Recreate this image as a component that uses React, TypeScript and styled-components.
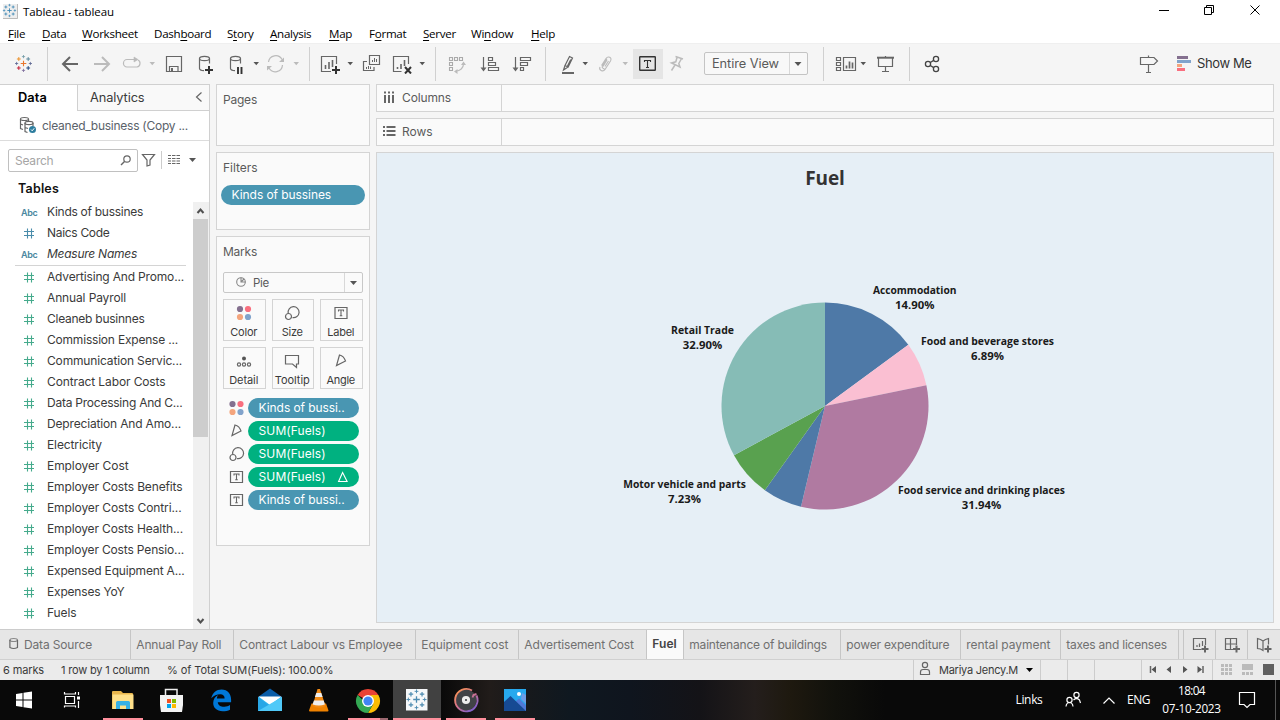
import React, { ReactNode, useLayoutEffect, useRef } from "react";
import styled, { createGlobalStyle, css } from "styled-components";

const UI = `Inter, "Liberation Sans", sans-serif`;
const SYS = `"Open Sans", "Noto Sans", sans-serif`;

const Global = createGlobalStyle`
  *, *::before, *::after { box-sizing: border-box; }
  html, body { margin: 0; padding: 0; overflow: hidden; }
  body { background: #f5f5f5; font-family: ${UI}; font-size: 12px; color: #3a3a3a; }
`;

/* ---------- text ---------- */

const TextSpan = styled.span`
  display: inline-block;
  white-space: pre;
  flex: none;
`;

/** A single line of text, tracked so that it fills exactly `w` pixels. */
function Line({ w, children }: { w: number; children: string }) {
  const ref = useRef<HTMLSpanElement>(null);
  useLayoutEffect(() => {
    const el = ref.current;
    if (!el) return;
    el.style.letterSpacing = "0px";
    const natural = el.getBoundingClientRect().width;
    el.style.letterSpacing = `${(w - natural) / children.length}px`;
  }, [w, children]);
  return <TextSpan ref={ref}>{children}</TextSpan>;
}

/* ---------- icon primitives ---------- */

const Svg = styled.svg`
  display: block;
  flex: none;
`;

/** An icon cell; x and y are the origin of its drawing grid. */
function Cell({ x, y = 54, w, h = 20, children }: { x: number; y?: number; w: number; h?: number; children?: ReactNode }) {
  return (
    <Svg width={w} height={h} viewBox={`${x} ${y} ${w} ${h}`} fill="none" stroke="#666" strokeWidth="1.2">
      {children}
    </Svg>
  );
}

const Caret = ({ x, y = 62, s = 6, c = "#555" }: { x: number; y?: number; s?: number; c?: string }) => (
  <path d={`M${x} ${y}h${s}l${-s / 2} ${s / 2 + 0.5}z`} fill={c} stroke="none" />
);

const Plus = ({ x, y, r, c, w = 1 }: { x: number; y: number; r: number; c: string; w?: number }) => (
  <path d={`M${x - r} ${y}h${2 * r}M${x} ${y - r}v${2 * r}`} stroke={c} strokeWidth={w} fill="none" />
);

const LOGO_COLORS = ["#e8762d", "#7099a5", "#c72037", "#1f447e", "#59879b", "#7b6a9a", "#5b6591", "#eb912b", "#5b879b"];

function TableauMark({ x, y, s = 1, mono }: { x: number; y: number; s?: number; mono?: string }) {
  const c = (i: number) => mono || LOGO_COLORS[i];
  return (
    <g>
      <Plus x={x} y={y} r={2.8 * s} c={c(0)} w={1.1 * s} />
      <Plus x={x} y={y - 6.9 * s} r={1.6 * s} c={c(1)} w={0.8 * s} />
      <Plus x={x} y={y + 6.9 * s} r={1.6 * s} c={c(5)} w={0.8 * s} />
      <Plus x={x - 6.9 * s} y={y} r={1.6 * s} c={c(6)} w={0.8 * s} />
      <Plus x={x + 6.9 * s} y={y} r={1.6 * s} c={c(6)} w={0.8 * s} />
      <Plus x={x - 4.7 * s} y={y - 4.5 * s} r={1.9 * s} c={c(7)} w={s} />
      <Plus x={x + 4.7 * s} y={y - 4.5 * s} r={1.9 * s} c={c(8)} w={s} />
      <Plus x={x - 4.7 * s} y={y + 4.5 * s} r={1.9 * s} c={c(2)} w={s} />
      <Plus x={x + 4.7 * s} y={y + 4.5 * s} r={1.9 * s} c={c(3)} w={s} />
    </g>
  );
}

/* ---------- window frame ---------- */

const Window = styled.div`
  width: 1280px;
  height: 720px;
  display: flex;
  flex-direction: column;
  overflow: hidden;
  background: #f5f5f5;
`;

const TitleBar = styled.header`
  height: 24px;
  flex: none;
  display: flex;
  background: #fff;
  color: #000;
  font: 11.5px/24px ${SYS};
`;

const Spacer = styled.div`
  flex: 1;
`;

const MenuBar = styled.nav`
  height: 19px;
  flex: none;
  display: flex;
  background: #fff;
  color: #000;
  font: 11.600px/19px ${SYS};
  padding-left: 8px;
`;

const MenuItem = styled.div<{ $slot: number }>`
  width: ${(p) => p.$slot}px;
  white-space: pre;
  letter-spacing: -0.28px;
  u { text-underline-offset: 2px; }
`;

const MENUS: [string, string, string, number][] = [
  ["", "F", "ile", 34], ["", "D", "ata", 40], ["", "W", "orksheet", 72], ["Dash", "b", "oard", 73],
  ["S", "t", "ory", 43], ["", "A", "nalysis", 59], ["", "M", "ap", 40], ["F", "o", "rmat", 54],
  ["", "S", "erver", 48], ["Wi", "n", "dow", 60], ["", "H", "elp", 40],
];

/* ---------- toolbar ---------- */

const Toolbar = styled.div`
  height: 41px;
  flex: none;
  display: flex;
  align-items: flex-start;
  padding-top: 11px;
  background: #f5f5f5;
  box-shadow: inset 0 1px #efefef;
`;

const Rule = styled.div`
  width: 1px;
  height: 34px;
  margin-top: -7px;
  background: #d0d0d0;
  flex: none;
`;

const LabelToggle = styled.div`
  width: 30px;
  height: 30px;
  margin-top: -5px;
  padding-top: 5px;
  background: #e5e5e5;
  flex: none;
`;

const FitSelect = styled.div`
  width: 104px;
  height: 23px;
  margin: -2px 15px 0 16px;
  border: 1px solid #c4c4c4;
  border-radius: 2px;
  display: flex;
  flex: none;
  background: #f8f8f8;
  color: #5a5a5a;
  font-size: 12.800px;
  line-height: 22px;
  padding-left: 7px;
`;

const SelectArrow = styled.div`
  width: 18px;
  margin-left: auto;
  border-left: 1px solid #d8d8d8;
  padding-top: 1px;
`;

const ShowMe = styled.div`
  font-size: 13px;
  line-height: 19px;
  color: #333;
`;

const Database = ({ x }: { x: number }) => (
  <>
    <ellipse cx={x + 5.5} cy="58.5" rx="5" ry="2.2" />
    <path d={`M${x + 0.5} 58.5v10c0 1.3 2 2 4.5 2.2M${x + 10.5} 58.5v5`} />
  </>
);

function MainToolbar() {
  const dim = "#bbb";
  return (
    <Toolbar>
      <Cell x={0} w={47}><TableauMark x={23.5} y={63.5} /></Cell>
      <Rule />
      <Cell x={48} w={39}><path d="M78 64H63.500M70 57l-7 7 7 7" strokeWidth="2" /></Cell>
      <Cell x={87} w={30}><path d="M94 64h14.500M102 57l7 7-7 7" stroke={dim} strokeWidth="2" /></Cell>
      <Cell x={117} w={43}>
        <path d="M134.500 59.500H127a3.500 3.700 0 0 0 0 7.500h10a3.500 3.700 0 0 0 1-7" stroke={dim} />
        <path d="M134 57l4 2.500-4 2.500z" fill={dim} stroke={dim} strokeWidth=".6" />
        <Caret x={149.500} s={5.500} c={dim} />
      </Cell>
      <Cell x={160} w={32}>
        <path d="M166.500 56.500h15v15h-15zM169.500 71.500v-5h8.500v5" />
        <path d="M171 68h2v3h-2z" fill="#666" stroke="none" />
      </Cell>
      <Cell x={192} w={32}><Database x={199} /><path d="M205 70h8M209 66v8" stroke="#333" strokeWidth="2" /></Cell>
      <Cell x={224} w={38}>
        <Database x={230} />
        <path d="M238 67v7M241.500 67v7" stroke="#333" strokeWidth="1.900" />
        <Caret x={253.500} s={5.500} />
      </Cell>
      <Cell x={262} w={47}>
        <path d="M268.500 62a7.200 7.200 0 0 1 13.500-2.500M282.500 65a7.200 7.200 0 0 1-13.500 3" stroke={dim} />
        <path d="M284 57.500v4.500h-5zM267 70.500V66h5z" fill={dim} stroke="none" />
        <Caret x={293.500} s={5.500} c={dim} />
      </Cell>
      <Rule />
      <Cell x={310} w={47}>
        <path d="M336.500 64V56.500h-15v15H331" />
        <path d="M325.500 69v-4M329 69v-7M332.500 67v-7" strokeWidth="1.600" />
        <path d="M332 70h8M336 66v8" stroke="#333" strokeWidth="2" />
        <Caret x={347.500} s={5.500} />
      </Cell>
      <Cell x={357} w={29}>
        <path d="M369.500 55.500h10v9h-10zM367 61.500h-3.500v9h10.500v-3.500" />
        <path d="M372.500 62v-2M374.500 62v-4M376.500 62v-3M366.500 69v-2M368.500 69v-3M370.500 69v-2.500" strokeWidth="1" />
      </Cell>
      <Cell x={386} w={49}>
        <path d="M408.500 64V56.500h-15v15h8" />
        <path d="M397.500 69v-2M401 69v-5M404.500 66v-6" strokeWidth="1.600" />
        <path d="M405 67l6 6.500M411 67l-6 6.500" stroke="#333" strokeWidth="2" />
        <Caret x={419.500} s={5.500} />
      </Cell>
      <Rule />
      <Cell x={436} w={40}>
        <path d="M449.500 57.500h3v3h-3zM454.500 57.500h3v3h-3zM459.500 57.500h3v3h-3zM449.500 62.500h3v3h-3zM449.500 67.500h3v3h-3z" stroke="#aaa" strokeWidth="1.100" />
        <path d="M456 71c4 0 7.500-3 7.500-7" stroke={dim} />
        <path d="M463.500 61.500l2.500 3.500h-5zM454 71.500l3.500-2.500v5z" fill={dim} stroke="none" />
      </Cell>
      <Cell x={476} w={31}>
        <path d="M483.500 57v12M488.500 57.500h4v3h-4zM488.500 62.500h7v3h-7zM488.500 67.500h10v3h-10z" />
        <path d="M480.500 67.500h6l-3 4z" fill="#666" stroke="none" />
      </Cell>
      <Cell x={507} w={38}>
        <path d="M515.500 57v12M520.500 57.500h10v3h-10zM520.500 62.500h7v3h-7zM520.500 67.500h3v3h-3z" />
        <path d="M512.500 67.500h6l-3 4z" fill="#666" stroke="none" />
      </Cell>
      <Rule />
      <Cell x={546} w={46}>
        <path d="M569.500 56.500l3 1.500-4.300 9-3.200-1.500zM565 65.500l-1.500 4.500 4.500-3M570.800 59.500l-3.300 6.500" />
        <path d="M562 73h12" strokeWidth="2" />
        <Caret x={582.500} s={5.500} />
      </Cell>
      <Cell x={592} w={41}>
        <path d="M601.500 65.500l4.500-7c2-3 6.500-1 4.500 2.500l-5.500 8.500c-2 3-6.500.5-5-2.500M605 69.500l-2-1.200c-1-.7-1-1.800-.5-2.600l4.500-7M603 66.500l4-6.500M605 66.500l3.500-5.500" stroke={dim} strokeWidth="1.100" />
        <Caret x={622.500} s={5.500} c={dim} />
      </Cell>
      <LabelToggle>
        <Cell x={633} w={30}>
          <rect x="639.700" y="56.700" width="15.600" height="13.600" rx=".5" stroke="#333" strokeWidth="1.400" />
          <path d="M644.500 62v-1.500h6V62M647.500 60.500v7M646 67.500h3" stroke="#333" strokeWidth="1.100" />
        </Cell>
      </LabelToggle>
      <Cell x={663} w={25}>
        <path d="M675.500 56.500l7.500 2.500M677 57.500l-1.200 4.300-4.300 1.200 8.500 4-1.200-3.500 2.500-4.500M675 65l-3.500 5.500" stroke={dim} strokeWidth="1.500" />
      </Cell>
      <FitSelect>
        <Line w={67}>Entire View</Line>
        <SelectArrow><Cell x={790} w={16}><Caret x={794.500} y={62} s={7} /></Cell></SelectArrow>
      </FitSelect>
      <Rule />
      <Cell x={824} w={47}>
        <path d="M836.500 57.500h4v3h-4zM836.500 62.500h4v3h-4zM836.500 67.500h4v3h-4zM843.500 57.500h12v13h-12z" />
        <path d="M846.500 68.500v-3M849.500 68.500v-7M852.500 68.500v-6" strokeWidth="1.700" />
        <Caret x={860.500} s={5.500} />
      </Cell>
      <Cell x={871} w={38}>
        <path d="M877 57.700h17" strokeWidth="2" />
        <path d="M878.500 58v8.500h14V58M885.500 56v1M885.500 66.500v4.500M882 71.500h7" />
      </Cell>
      <Rule />
      <Cell x={910} w={40}>
        <g stroke="#444" strokeWidth="1.300">
          <circle cx="928" cy="64" r="2.600" /><circle cx="936" cy="59" r="2.600" /><circle cx="936" cy="69" r="2.600" />
          <path d="M930.300 62.500l3.400-2.100M930.300 65.500l3.400 2.100" />
        </g>
      </Cell>
      <Spacer />
      <Cell x={1130} w={42}>
        <path d="M1140.500 57.500h13.500l3.500 3.500-3.500 3.500h-13.500zM1148.500 55.500v2M1148.500 64.500v8M1146 72.500h5" />
      </Cell>
      <Cell x={1172} w={25}>
        <g stroke="none">
          <path d="M1177 56h11v3h-11z" fill="#84708f" /><path d="M1177 60h14v3h-14z" fill="#81a3cb" />
          <path d="M1177 64h5v3h-5z" fill="#f4a57d" /><path d="M1177 68h8v3h-8z" fill="#f96f7f" />
        </g>
      </Cell>
      <ShowMe><Line w={54.500}>Show Me</Line></ShowMe>
      <Cell x={1251.5} w={28.5} />
    </Toolbar>
  );
}

/* ---------- workspace ---------- */

const Workspace = styled.main`
  height: 545px;
  flex: none;
  display: flex;
`;

const Sidebar = styled.aside`
  width: 210px;
  flex: none;
  background: #fff;
  border-right: 1px solid #d0d0d0;
  border-top: 1px solid #d0d0d0;
  display: flex;
  flex-direction: column;
  overflow: hidden;
`;

const PaneTabs = styled.div`
  display: flex;
  height: 26px;
  flex: none;
  font-size: 12.800px;
  line-height: 25px;
`;

const PaneTab = styled.div<{ $active?: boolean }>`
  ${(p) =>
    p.$active
      ? css`width: 77px; padding-left: 18px; color: #000; font-weight: 600;`
      : css`flex: 1; padding-left: 12px; display: flex; justify-content: space-between; background: #f9f9f9; border-left: 1px solid #d0d0d0; border-bottom: 1px solid #d0d0d0;`}
`;

const SourceRow = styled.div`
  height: 30px;
  flex: none;
  display: flex;
  border-bottom: 1px solid #dcdcdc;
  color: #5a626a;
  line-height: 29px;
`;

const SearchRow = styled.div`
  display: flex;
  height: 40px;
  flex: none;
  padding: 8px 0 0 8px;
`;

const SearchBox = styled.div`
  width: 130px;
  height: 23px;
  border: 1px solid #c0c0c0;
  border-radius: 2px;
  padding-left: 6px;
  color: #a5a5a5;
  line-height: 22px;
  display: flex;
  justify-content: space-between;
`;

const Heading = styled.h2`
  margin: 0;
  height: 21px;
  flex: none;
  padding-left: 18px;
  font-size: 12.500px;
  line-height: 15px;
  font-weight: 600;
  color: #111;
`;

const Fields = styled.div`
  display: flex;
  flex: 1;
  min-height: 0;
`;

const FieldList = styled.div`
  flex: 1;
`;

const FieldRow = styled.div<{ $italic?: boolean }>`
  height: 21px;
  display: flex;
  line-height: 20px;
  font-style: ${(p) => (p.$italic ? "italic" : "normal")};
`;

const FieldType = styled.div`
  width: 47px;
  flex: none;
  padding-left: 21px;
  font: 600 9px/21px ${UI};
  color: #4a87a0;
`;

const FieldRule = styled.hr`
  height: 1px;
  border: 0;
  margin: 0 7px 1px 15px;
  background: #d4d4d4;
`;

const ScrollTrack = styled.div`
  width: 16px;
  background: #f0f0f0;
  display: flex;
  flex-direction: column;
`;

const ScrollThumb = styled.div`
  width: 15px;
  height: 218px;
  background: #cdcdcd;
`;

type Field = { name: string; w: number; kind: "abc" | "dim" | "measure"; italic?: boolean };
const DIMENSIONS: Field[] = [
  { name: "Kinds of bussines", w: 96, kind: "abc" },
  { name: "Naics Code", w: 62.5, kind: "dim" },
  { name: "Measure Names", w: 90, kind: "abc", italic: true },
];
const MEASURES: [string, number][] = [
  ["Advertising And Promo...", 137], ["Annual Payroll", 79], ["Cleaneb businnes", 97.5],
  ["Commission Expense ...", 131], ["Communication Servic...", 135], ["Contract Labor Costs", 118.5],
  ["Data Processing And C...", 135.5], ["Depreciation And Amo...", 134], ["Electricity", 55],
  ["Employer Cost", 81.5], ["Employer Costs Benefits", 135.5], ["Employer Costs Contri...", 134.5],
  ["Employer Costs Health...", 136], ["Employer Costs Pensio...", 137], ["Expensed Equipment A...", 137.5],
  ["Expenses YoY", 77.5], ["Fuels", 29.5],
];

function FieldItem({ field }: { field: Field }) {
  return (
    <FieldRow $italic={field.italic}>
      {field.kind === "abc" ? (
        <FieldType><Line w={16.500}>Abc</Line></FieldType>
      ) : (
        <Cell x={0} y={0} w={47} h={21}>
          <path d="M24 8.500h10M24 12.500h10M27.500 5.500v10M31.500 5.500v10" stroke={field.kind === "dim" ? "#4a8caa" : "#45aa8c"} strokeWidth="1.100" />
        </Cell>
      )}
      <Line w={field.w}>{field.name}</Line>
    </FieldRow>
  );
}

function DataPane() {
  return (
    <Sidebar>
      <PaneTabs>
        <PaneTab $active><Line w={29}>Data</Line></PaneTab>
        <PaneTab>
          <Line w={54.500}>Analytics</Line>
          <Cell x={190} y={85} w={19} h={24}><path d="M201.500 92.500l-5 4.500 5 4.500" /></Cell>
        </PaneTab>
      </PaneTabs>
      <SourceRow>
        <Cell x={0} y={111} w={42} h={28}>
          <ellipse cx="24.500" cy="119" rx="4" ry="1.500" />
          <path d="M20.500 119v9.500l2.500 1M28.500 119v2M20.500 124l2.500 1" />
          <ellipse cx="29" cy="123" rx="4" ry="1.600" />
          <path d="M25 123v8.500l2.500 1M33 123v3M25 127.500l3 1" />
          <circle cx="32.500" cy="129.500" r="3.500" fill="#2d7d9e" stroke="none" />
          <path d="M31 129.500l1.200 1.300 2-2.500" stroke="#fff" strokeWidth="1" />
        </Cell>
        <Line w={146}>cleaned_business (Copy ...</Line>
      </SourceRow>
      <SearchRow>
        <SearchBox>
          <Line w={38.5}>Search</Line>
          <Cell x={117} y={150} w={20} h={21}><circle cx="127" cy="159" r="3.200" /><path d="M124.500 161.500l-3.500 3.500" strokeWidth="1.500" /></Cell>
        </SearchBox>
        <Cell x={138} y={149} w={71} h={24}>
          <path d="M142.500 154.500h12l-4.500 5.500v5l-3 1v-6z" />
          <path d="M161.500 151v18" stroke="#ccc" strokeWidth="1" />
          <path d="M168 155.500h3M172 155.500h3.500M176.500 155.500h3.500M168 158.500h3M172 158.500h3.500M176.500 158.500h3.500M168 161h3M172 161h3.500M176.500 161h3.500M168 163.500h3M172 163.500h3.500M176.500 163.500h3.500" strokeWidth="1.200" />
          <Caret x={189} y={158} s={7} />
        </Cell>
      </SearchRow>
      <Heading><Line w={41}>Tables</Line></Heading>
      <Fields>
        <FieldList>
          {DIMENSIONS.map((f) => <FieldItem key={f.name} field={f} />)}
          <FieldRule />
          {MEASURES.map(([name, w]) => <FieldItem key={name} field={{ name, w, kind: "measure" }} />)}
        </FieldList>
        <ScrollTrack>
          <Cell x={193} y={202} w={16} h={17}><path d="M197.500 213l3-3.500 3 3.500" strokeWidth="2" stroke="#505050" /></Cell>
          <ScrollThumb />
          <Spacer />
          <Cell x={193} y={612} w={16} h={17}><path d="M197.500 619l3 3.500 3-3.500" strokeWidth="2" stroke="#505050" /></Cell>
        </ScrollTrack>
      </Fields>
    </Sidebar>
  );
}

const CardColumn = styled.section`
  width: 154px;
  margin: 0 6px;
  flex: none;
  display: flex;
  flex-direction: column;
  gap: 6px;
`;

const Card = styled.div<{ $h: number }>`
  height: ${(p) => p.$h}px;
  flex: none;
  border: 1px solid #d4d4d4;
  background: #fafafa;
`;

const CardTitle = styled.div`
  height: 32px;
  padding-left: 6px;
  line-height: 30px;
  color: #5a5a5a;
`;

const Pill = styled.div<{ $color: string; $w: number }>`
  width: ${(p) => p.$w}px;
  height: 20px;
  border-radius: 10px;
  background: ${(p) => p.$color};
  color: #fff;
  line-height: 20px;
  padding-left: 10.600px;
  display: flex;
  flex: none;
`;

const FilterShelf = styled.div`
  padding-left: 4px;
`;

const MarkSelect = styled.div`
  height: 21px;
  width: 140px;
  margin: 3px 0 6px 6px;
  border: 1px solid #c8c8c8;
  border-radius: 2px;
  display: flex;
  line-height: 20px;
  color: #5a5a5a;
  font-size: 11.500px;
`;

const MarkGrid = styled.div`
  display: grid;
  grid-template-columns: 43px 42px 43px;
  grid-auto-rows: 42px;
  gap: 6px;
  padding-left: 6px;
`;

const MarkButton = styled.div`
  border: 1px solid #d4d4d4;
  display: flex;
  flex-direction: column;
  align-items: center;
  padding-right: 1.500px;
  font-size: 11px;
  line-height: 12px;
`;

const Encodings = styled.div`
  padding-top: 9px;
  display: grid;
  gap: 3px;
`;

const Encoding = styled.div`
  display: flex;
  height: 20px;
`;

const BLUE = "#4996b2";
const GREEN = "#00b180";

type MarkKind = "color" | "size" | "label" | "detail" | "tooltip" | "angle";

function MarkGlyph({ kind }: { kind: MarkKind }) {
  switch (kind) {
    case "color":
      return (
        <g stroke="none">
          <circle cx="-4" cy="-4" r="3.100" fill="#84708f" /><circle cx="4" cy="-4" r="3.100" fill="#f96f7f" />
          <circle cx="-4" cy="4" r="3.100" fill="#f4a57d" /><circle cx="4" cy="4" r="3.100" fill="#81a3cb" />
        </g>
      );
    case "size":
      return <><path d="M-3.800 .3A5.500 5.500 0 1 1 .5 4.600" /><circle cx="-3.500" cy="3.500" r="3" /></>;
    case "label":
      return <><path d="M-6 -5.500H6v11H-6z" /><path d="M-2.500 -1.500V-3h5v1.500M0 -3v5.500M-1.300 2.700h2.600" strokeWidth="1.100" /></>;
    case "detail":
      return (
        <>
          <circle cx="0" cy="-2.500" r="2" fill="#555" stroke="none" />
          <circle cx="-5" cy="3.500" r="1.600" /><circle cx="0" cy="3.500" r="1.600" /><circle cx="5" cy="3.500" r="1.600" />
        </>
      );
    case "tooltip":
      return <path d="M-6.500 -5.500h13v8.500H4.500v3.500L.5 3h-7z" />;
    case "angle":
      return <path d="M-1.500 -6L-4.500 4.500 4.500 0C3.500-3 1-5.500-1.500-6z" />;
  }
}

const MarkIcon = ({ kind, w, h, dx = 0, dy = 0 }: { kind: MarkKind; w: number; h: number; dx?: number; dy?: number }) => (
  <Cell x={-w / 2 - dx} y={-h / 2 - dy} w={w} h={h}><MarkGlyph kind={kind} /></Cell>
);

const MARKS: [MarkKind, string, number][] = [
  ["color", "Color", 27], ["size", "Size", 21], ["label", "Label", 27],
  ["detail", "Detail", 29], ["tooltip", "Tooltip", 35], ["angle", "Angle", 28.5],
];

const ENCODINGS: [MarkKind, string, number, string, boolean][] = [
  ["color", "Kinds of bussi..", 86, BLUE, false],
  ["angle", "SUM(Fuels)", 67, GREEN, false],
  ["size", "SUM(Fuels)", 67, GREEN, false],
  ["label", "SUM(Fuels)", 67, GREEN, true],
  ["label", "Kinds of bussi..", 86, BLUE, false],
];

function Cards() {
  return (
    <CardColumn>
      <Card $h={62}><CardTitle><Line w={34}>Pages</Line></CardTitle></Card>
      <Card $h={78}>
        <CardTitle><Line w={34.5}>Filters</Line></CardTitle>
        <FilterShelf><Pill $color={BLUE} $w={144}><Line w={99.5}>Kinds of bussines</Line></Pill></FilterShelf>
      </Card>
      <Card $h={310}>
        <CardTitle><Line w={34}>Marks</Line></CardTitle>
        <MarkSelect>
          <Cell x={224} y={273} w={29} h={19}><circle cx="241" cy="282" r="4.300" stroke="#888" strokeWidth="1.100" /><path d="M241 277.500v4.500h4.500M241 282l3-3" stroke="#888" strokeWidth="1.100" /></Cell>
          <Line w={16}>Pie</Line>
          <Spacer />
          <Cell x={344} y={273} w={18} h={19}><path d="M344.500 273v19" stroke="#d8d8d8" strokeWidth="1" /><Caret x={350} y={281} s={7} /></Cell>
        </MarkSelect>
        <MarkGrid>
          {MARKS.map(([kind, name, w]) => (
            <MarkButton key={name}><MarkIcon kind={kind} w={38} h={26} /><Line w={w}>{name}</Line></MarkButton>
          ))}
        </MarkGrid>
        <Encodings>
          {ENCODINGS.map(([kind, name, w, color, delta], i) => (
            <Encoding key={i}>
              <MarkIcon kind={kind} w={31} h={20} dx={4} />
              <Pill $color={color} $w={111}>
                <Line w={w}>{name}</Line>
                {delta && <Cell x={325.600} y={467} w={30} h={20}><path d="M342.200 472.500l4.500 9h-8.500z" stroke="#fff" strokeWidth="1.100" /></Cell>}
              </Pill>
            </Encoding>
          ))}
        </Encodings>
      </Card>
    </CardColumn>
  );
}

const ViewColumn = styled.section`
  width: 898px;
  display: flex;
  flex-direction: column;
  gap: 6px;
`;

const Shelf = styled.div`
  height: 28px;
  flex: none;
  border: 1px solid #d4d4d4;
  background: #fafafa;
  display: flex;
`;

const ShelfName = styled.div`
  width: 125px;
  display: flex;
  border-right: 1px solid #d4d4d4;
  line-height: 26px;
  color: #5a5a5a;
`;

const Sheet = styled.div`
  height: 471px;
  border: 1px solid #d4d4d4;
  background: #e6eff6;
`;

const SheetTitle = styled.h1`
  margin: 0;
  height: 47px;
  font: 700 19px/50px ${SYS};
  color: #333;
  text-align: center;
`;

const ChartText = styled.text`
  font: 700 10.800px ${SYS};
  fill: #1a1a1a;
  stroke: none;
  text-anchor: middle;
`;

const SLICES: [number, string][] = [
  [14.9, "#4e79a7"], [6.89, "#fabfd2"], [31.94, "#b07aa1"], [6.14, "#4e79a7"], [7.23, "#59a14f"], [32.9, "#86bcb6"],
];
const CHART_LABELS: [string, number, string, number, number, number][] = [
  ["Accommodation", 83.5, "14.90%", 39.5, 914.7, 294],
  ["Food and beverage stores", 133, "6.89%", 33, 987.5, 345],
  ["Food service and drinking places", 167, "31.94%", 39.5, 981.5, 494],
  ["Motor vehicle and parts", 122.5, "7.23%", 33, 684.5, 488],
  ["Retail Trade", 63, "32.90%", 39.5, 702.5, 334],
];

function PieChart() {
  const cx = 825, cy = 406, r = 103.5;
  let sum = 0;
  const point = (p: number) => {
    const a = (p / 100) * 2 * Math.PI;
    return `${cx + r * Math.sin(a)} ${cy - r * Math.cos(a)}`;
  };
  return (
    <Cell x={377} y={200} w={896} h={420}>
      {SLICES.map(([share, color], i) => {
        const from = sum;
        sum += share;
        return <path key={i} d={`M${cx} ${cy}L${point(from)}A${r} ${r} 0 0 1 ${point(sum)}z`} fill={color} stroke="none" />;
      })}
      {CHART_LABELS.map(([name, w, value, vw, x, y]) => (
        <g key={name}>
          <ChartText x={x} y={y} textLength={w} lengthAdjust="spacingAndGlyphs">{name}</ChartText>
          <ChartText x={x} y={y + 15} textLength={vw} lengthAdjust="spacingAndGlyphs">{value}</ChartText>
        </g>
      ))}
    </Cell>
  );
}

function View() {
  return (
    <ViewColumn>
      <Shelf>
        <ShelfName>
          <Cell x={377} y={85} w={25} h={26}><path d="M385 91.500v2M389 91.500v2M393 91.500v2M385 95v8M389 95v8M393 95v8" strokeWidth="2" /></Cell>
          <Line w={49}>Columns</Line>
        </ShelfName>
      </Shelf>
      <Shelf>
        <ShelfName>
          <Cell x={377} y={119} w={25} h={26}><path d="M383 127h2M383 131h2M383 135h2M386.500 127h9M386.500 131h9M386.500 135h9" strokeWidth="1.800" /></Cell>
          <Line w={30.5}>Rows</Line>
        </ShelfName>
      </Shelf>
      <Sheet>
        <SheetTitle><Line w={39.500}>Fuel</Line></SheetTitle>
        <PieChart />
      </Sheet>
    </ViewColumn>
  );
}

/* ---------- sheet tabs and status ---------- */

const SheetTabs = styled.nav`
  height: 31px;
  flex: none;
  display: flex;
  background: #e6e6e6;
  border-top: 1px solid #ccc;
  border-bottom: 1px solid #d0d0d0;
`;

const SheetTab = styled.div<{ $w: number; $active?: boolean }>`
  width: ${(p) => p.$w}px;
  flex: none;
  display: flex;
  border-right: 1px solid #c6c6c6;
  padding-left: 5.300px;
  line-height: ${(p) => (p.$active ? 28 : 30)}px;
  color: ${(p) => (p.$active ? "#444" : "#707070")};
  background: ${(p) => (p.$active ? "#fafafa" : "transparent")};
  font-weight: ${(p) => (p.$active ? 600 : 400)};
`;

const TabAction = styled.div<{ $w: number }>`
  width: ${(p) => p.$w}px;
  border-right: 1px solid #c6c6c6;
  overflow: hidden;
`;

const TABS: [string, number, number][] = [
  ["Annual Pay Roll", 103, 85], ["Contract Labour vs Employee", 182, 163], ["Equipment cost", 103, 87],
  ["Advertisement Cost", 128, 109.5], ["Fuel", 37, 24.5], ["maintenance of buildings", 157, 137.5],
  ["power expenditure", 120, 103], ["rental payment", 100, 84], ["taxes and licenses", 118, 100.5],
];

const StatusBar = styled.footer`
  height: 20px;
  flex: none;
  display: flex;
  background: #ebebeb;
  font-size: 11px;
  line-height: 20px;
`;

const StatusText = styled.div<{ $slot: number }>`
  width: ${(p) => p.$slot}px;
  padding-left: 3px;
  flex: none;
`;

const StatusCell = styled.div<{ $w: number }>`
  width: ${(p) => p.$w}px;
  border-left: 1px solid #ccc;
  display: flex;
  flex: none;
`;

function Bottom() {
  return (
    <>
      <SheetTabs>
        <SheetTab $w={131}>
          <Cell x={5.300} y={630} w={18.700} h={29}><ellipse cx="14" cy="640" rx="3.800" ry="1.500" stroke="#888" /><path d="M10.200 640v7.500q3.800 2 7.600 0V640" /></Cell>
          <Line w={68}>Data Source</Line>
        </SheetTab>
        {TABS.map(([name, w, tw]) => (
          <SheetTab key={name} $w={w} $active={name === "Fuel"}><Line w={tw}>{name}</Line></SheetTab>
        ))}
        <TabAction $w={5} />
        <TabAction $w={32}>
          <Cell x={1184} y={630} w={31} h={29}>
            <path d="M1205.500 645v-6.500h-12v11h8M1197 647v-2M1199.500 647v-3.500M1202.500 646v-5" />
            <path d="M1201.500 649h7M1205 645.500v7" strokeWidth="2" />
          </Cell>
        </TabAction>
        <TabAction $w={32}>
          <Cell x={1216} y={630} w={31} h={29}>
            <path d="M1236.500 645v-6.500h-11v11h8M1230.500 638.500v11M1225.500 644h11" />
            <path d="M1233 649h7M1236.500 645.500v7" strokeWidth="2" />
          </Cell>
        </TabAction>
        <Cell x={1248} y={630} w={32} h={29}>
          <path d="M1263 641l-2.500-1.500-3-1v10l3 .5 2.500 1.500v-9.500l2.500-1.500 3-1v6" />
          <path d="M1264.500 649h7M1268 645.500v7" strokeWidth="2" />
        </Cell>
      </SheetTabs>
      <StatusBar>
        <StatusText $slot={58}><Line w={41}>6 marks</Line></StatusText>
        <StatusText $slot={106}><Line w={88.5}>1 row by 1 column</Line></StatusText>
        <StatusText $slot={180}><Line w={166.500}>% of Total SUM(Fuels): 100.00%</Line></StatusText>
        <Spacer />
        <StatusCell $w={127}>
          <Cell x={914} y={660} w={25} h={20}><circle cx="925" cy="665" r="2.600" /><path d="M920.500 674.500v-2.500q0-2.500 2.500-2.500h4q2.500 0 2.500 2.500v2.500z" /></Cell>
          <Line w={79}>Mariya Jency.M</Line>
          <Cell x={1018} y={660} w={20} h={20}><Caret x={1026} y={668} s={7} c="#000" /></Cell>
        </StatusCell>
        <StatusCell $w={27} /><StatusCell $w={27} /><StatusCell $w={47} />
        <StatusCell $w={71}>
          <Cell x={1142} y={660} w={70} h={20}>
            <path d="M1150.500 666v7M1203 666v7" strokeWidth="1.500" />
            <path d="M1156 666v7l-4.500-3.500zM1171 666v7l-4.500-3.500zM1183 666v7l4.500-3.500zM1197.500 666v7l4.500-3.500z" fill="#555" stroke="none" />
          </Cell>
        </StatusCell>
        <StatusCell $w={68}>
          <Cell x={1213} y={660} w={67} h={20}>
            <g stroke="none" fill="#bbb">
              {[0, 1, 2].map((r) => [0, 1, 2].map((c) => <rect key={`${r}${c}`} x={1221 + c * 4} y={664 + r * 4} width="3" height="3" />))}
              <path d="M1242 664h11v6h-11zM1242 672h3v3h-3zM1246 672h3v3h-3zM1250 672h3v3h-3z" />
              <path d="M1263 664h11v11h-11z" fill="#606060" />
            </g>
          </Cell>
        </StatusCell>
      </StatusBar>
    </>
  );
}

/* ---------- desktop taskbar ---------- */

const Taskbar = styled.footer`
  height: 40px;
  flex: none;
  display: flex;
  color: #fff;
  font: 12px/40px ${SYS};
  background: linear-gradient(90deg, #090909 0, #090909 441px, #211c1a 490px, #17191c 525px, #0f1820 570px, #0f151e 630px, #141317 700px, #241e1c 755px, #1e190f 790px, #11110c 835px, #090909 885px);
`;

const TaskButton = styled.div<{ $active?: boolean }>`
  background: ${(p) => (p.$active ? "#414141" : "transparent")};
  flex: none;
`;

const Clock = styled.div`
  width: 60px;
  line-height: 18px;
  padding: 1px 1px 0 0;
  font-size: 11.800px;
  display: flex;
  flex-direction: column;
  align-items: center;
`;

const TrayText = styled.div<{ $slot: number }>`
  width: ${(p) => p.$slot}px;
  flex: none;
`;

const Underline = ({ x, w }: { x: number; w: number }) => <rect x={x} y="718" width={w} height="2" fill="#ff8f9c" stroke="none" />;

function DesktopTaskbar() {
  const t = (x: number, w: number, art: ReactNode, active = false) => (
    <TaskButton $active={active}><Cell x={x} y={680} w={w} h={40}>{art}</Cell></TaskButton>
  );
  return (
    <Taskbar>
      {t(0, 48, <path d="M16 694l6.500-1v6.500H16zM23.500 692.800L32 691.500v8h-8.500zM16 700.500h6.500v6.500l-6.500-1zM23.500 700.500H32v8l-8.500-1.200z" fill="#fff" stroke="none" />)}
      {t(48, 49, <><path d="M65.500 696.500h9v7h-9zM64.500 692v2h11v-2M64.500 707.500v-1.500h11v1.500M78.500 692v3M78.500 701v7" stroke="#fff" strokeWidth="1.200" /><path d="M77 696.500h3v3h-3z" fill="#fff" stroke="none" /></>)}
      {t(97, 49, <g stroke="none"><path d="M112 692q0-1 1-1h8l2 2h9q1 0 1 1v15h-21z" fill="#e9b64c" /><path d="M112.500 694.500h21V709h-21z" fill="#ffe08a" /><path d="M116 709v-6.500q0-1.500 1.500-1.500h11q1.500 0 1.500 1.500v6.500h-4v-3.500h-6v3.500z" fill="#38b1e6" /><Underline x={103} w={40} /></g>)}
      {t(146, 49, <><path d="M165.500 695v-5.500h11.500V695" stroke="#eee" strokeWidth="1.500" /><g stroke="none"><path d="M160 695h23v10l-1 7h-21l-1-7z" fill="#f3f3f3" /><path d="M167 699h4v4h-4z" fill="#f25022" /><path d="M172 699h4v4h-4z" fill="#7fba00" /><path d="M167 704h4v4h-4z" fill="#00a4ef" /><path d="M172 704h4v4h-4z" fill="#ffb900" /></g></>)}
      {t(195, 49, <path d="M211.300 698.300C212.500 692.500 216.500 689.500 221.500 689.500c6.300 0 9.600 4.700 9.600 10v2.700h-13.300c.2 3.400 3.500 4.700 6.700 4.500 2-.1 3.900-.6 5.500-1.600v4.600c-2 1-4.600 1.600-7.300 1.600-6 0-9.500-3.500-9.500-8.200 0-3.800 2-6.600 5.300-8.300-1.100 1.100-1.500 2.500-1.600 3.700h7.700c.2-2.700-1.600-4.300-4.300-4.300-3.500 0-6.600 1.400-9 4.100z" fill="#0078d7" stroke="none" />)}
      {t(244, 49, <g stroke="none"><path d="M258 697l12-8.500 12 8.500z" fill="#0a5da8" /><path d="M258 697h24v14h-24z" fill="#2fb4ef" /><path d="M258.500 696.500h23l-11.500 8.500z" fill="#fff" /><path d="M258 697l18 14h-18z" fill="#29a7e6" /><path d="M282 697l-24 14h24z" fill="#50c9f8" /></g>)}
      {t(293, 49, <g stroke="none"><path d="M311.500 703.500h14.500l2.500 7q0 1-1 1h-17.500q-1 0-1-1z" fill="#ef8200" /><path d="M317.500 689h2.500l5.500 17q-6.500 3.500-13 0z" fill="#f28b16" /><path d="M316.300 693h5l1.300 4h-7.700zM313.900 700.500h9.800l1.200 4q-6 2-12.300 0z" fill="#eee" /></g>)}
      {t(342, 51, <g stroke="none"><path d="M368 701L357.600 695A12 12 0 0 1 378.400 695z" fill="#ea4335" /><path d="M378.400 695A12 12 0 0 1 368 713l5.200-9L371 695z" fill="#fbbc04" /><path d="M357.600 695A12 12 0 0 0 368 713l5.200-9-5.200 1z" fill="#34a853" /><circle cx="368" cy="701" r="6" fill="#fff" /><circle cx="368" cy="701" r="4.600" fill="#4285f4" /><Underline x={348} w={32} /><rect x="380" y="718" width="8" height="2" fill="#9c6870" /></g>)}
      {t(393, 48, <><rect x="406" y="689" width="21.500" height="21.500" fill="#f6f8fa" stroke="none" /><TableauMark x={416.500} y={699.500} s={1.180} mono="#4c8ab0" /><Underline x={393} w={48} /></>, true)}
      {t(441, 49, <><defs><linearGradient id="ring" x1="0" y1="0" x2=".8" y2="1"><stop offset="0" stopColor="#ff9a4b" /><stop offset=".5" stopColor="#d9748a" /><stop offset="1" stopColor="#7a5fd0" /></linearGradient></defs><circle cx="466" cy="700" r="10.500" fill="#414347" stroke="none" /><path d="M472 690.500A11.200 11.200 0 1 0 476.500 695.500M472.500 697.500l1-2.500 3-1" stroke="url(#ring)" strokeWidth="1.900" /><circle cx="466" cy="700" r="2.600" stroke="#eee" strokeWidth="3" /><Underline x={446} w={40} /></>)}
      {t(490, 51, <g stroke="none"><path d="M504 689h22v22h-22z" fill="#27a9ee" /><path d="M515 702l4-3.500 7 7V711h-11z" fill="#4f79d8" /><path d="M504 702l6.500-6 15.500 15h-22z" fill="#164a93" /><path d="M522 693l4 2v9l-5-5z" fill="#6d9ce6" /><circle cx="519" cy="694" r="2" fill="#fff" /><Underline x={495} w={40} /></g>)}
      <Spacer />
      <TrayText $slot={40.500}><Line w={27}>Links</Line></TrayText>
      <Cell x={1056} y={680} w={71} h={40}>
        <g stroke="#fff" strokeWidth="1.200">
          <circle cx="1076.500" cy="695" r="2.600" /><path d="M1073.500 700q3-3 6 0l1 3" />
          <circle cx="1069.500" cy="700" r="2.600" /><path d="M1066 706.500q.5-4 3.500-4t3.500 4" />
          <path d="M1103.500 703.500l5.500-5.500 5.500 5.500" />
        </g>
      </Cell>
      <TrayText $slot={35}><Line w={23}>ENG</Line></TrayText>
      <Clock><Line w={27}>18:04</Line><Line w={58.500}>07-10-2023</Line></Clock>
      <Cell x={1222} y={680} w={58} h={40}>
        <path d="M1239.500 692.500h15v12h-4.500l-3 3-3-3h-4.500z" stroke="#fff" strokeWidth="1.200" />
        <path d="M1275.500 680v40" stroke="#555" strokeWidth="1" />
      </Cell>
    </Taskbar>
  );
}

export default function App() {
  return (
    <>
      <Global />
      <Window>
        <TitleBar>
          <Cell x={0} y={0} w={23} h={24}>
            <path d="M3 4h15v15H3z" fill="#eee" stroke="none" />
            <path d="M17.500 4v14.500H3" stroke="#bbb" strokeWidth="1" />
            <TableauMark x={9.500} y={10.500} s={0.780} mono="#3683b3" />
          </Cell>
          <Line w={91}>Tableau - tableau</Line>
          <Spacer />
          <Cell x={1140} y={0} w={140} h={24}>
            <path d="M1159 10.500h10M1204.500 7.500h7v7h-7zM1206.500 7v-1.500h7v7h-1.500M1250.500 5.500l9 9M1259.500 5.500l-9 9" stroke="#000" strokeWidth="1" />
          </Cell>
        </TitleBar>
        <MenuBar>
          {MENUS.map(([a, u, b, w]) => <MenuItem key={a + u + b} $slot={w}>{a}<u>{u}</u>{b}</MenuItem>)}
        </MenuBar>
        <MainToolbar />
        <Workspace>
          <DataPane />
          <Cards />
          <View />
        </Workspace>
        <Bottom />
        <DesktopTaskbar />
      </Window>
    </>
  );
}
